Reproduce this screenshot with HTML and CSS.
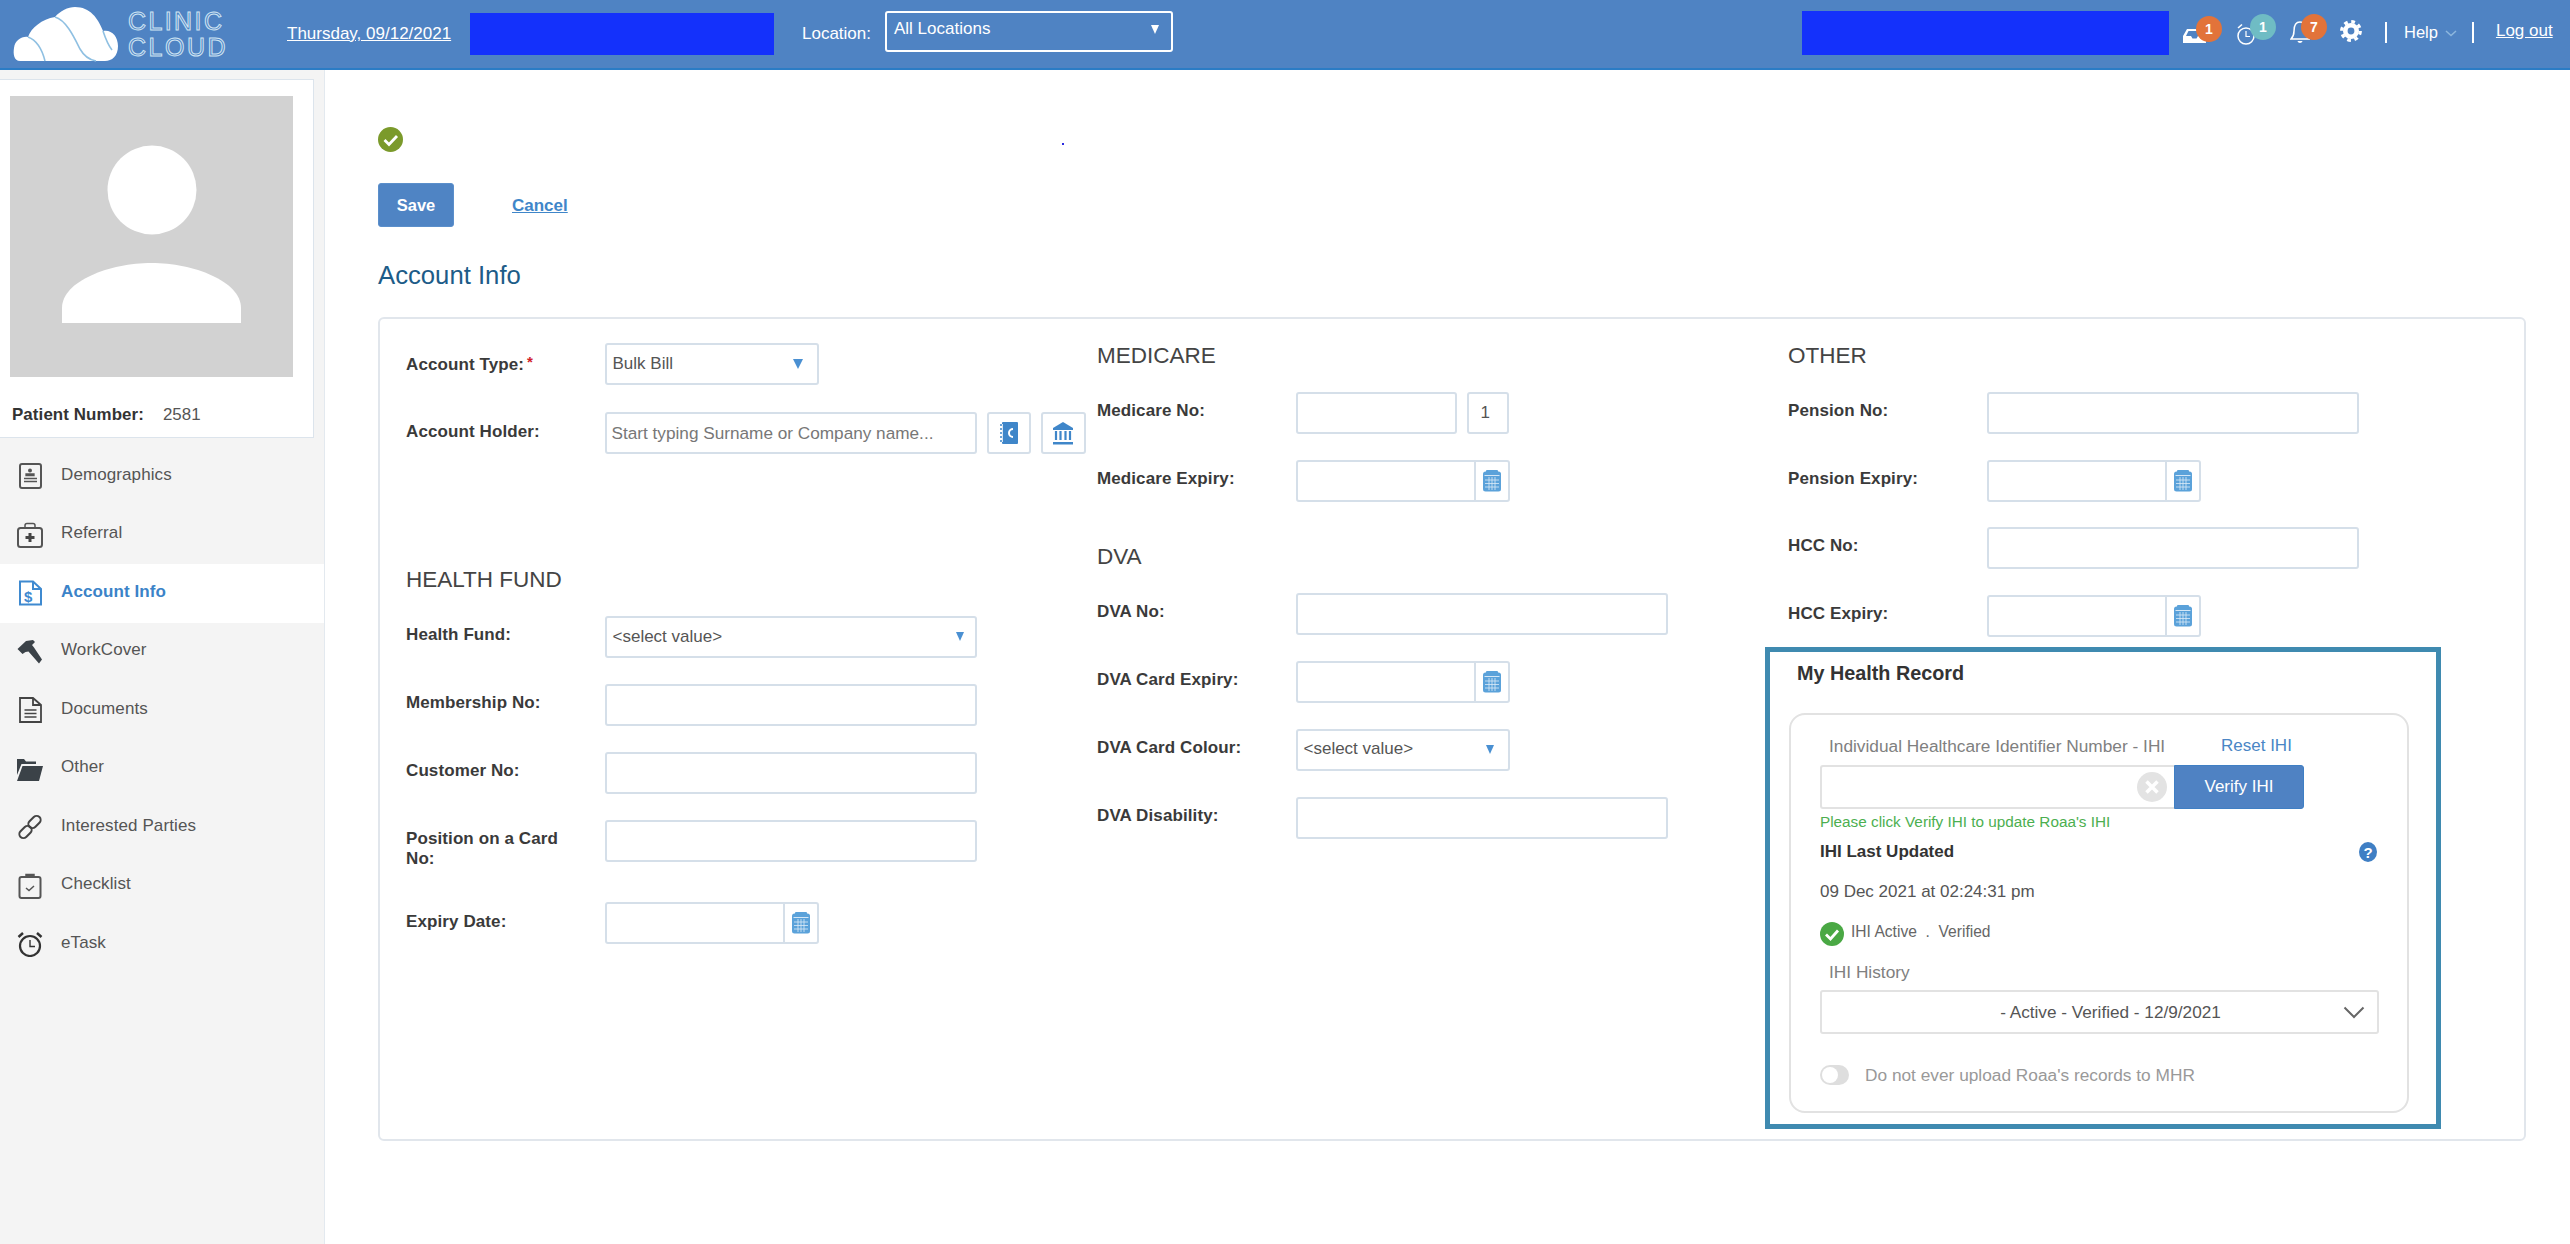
FILE: index.html
```html
<!DOCTYPE html>
<html lang="en">
<head>
<meta charset="utf-8">
<title>Clinic Cloud - Account Info</title>
<link rel="stylesheet" href="styles.css">
</head>
<body>
<svg class="defs" width="0" height="0" aria-hidden="true">
  <symbol id="cal" viewBox="0 0 18 22">
    <rect x="0" y="1.5" width="18" height="20" rx="2.5" fill="#5ba2da"/>
    <rect x="3" y="0" width="12" height="3" rx="1" fill="#5ba2da"/>
    <path d="M1.5 5.500h15" stroke="#d5e7f6" stroke-width="1"/>
    <path d="M6 7v13M9 7v13M12 7v13M2 10h14M2 13.500h14M2 17h14" stroke="#dcebf8" stroke-width="0.800"/>
  </symbol>
</svg>

<header class="topbar">
  <div class="logo">
    <svg class="logo-cloud" width="106" height="56" viewBox="13 2 106 56">
      <path d="M20 57C14 57 13 50 14 44C15 36 22 32 28 33C31 24 42 15 55 13C60 7 68 3 75 3C90 3 98 14 103 27C111 25 118 32 118 42C118 52 112 57 105 57Z" fill="#fff"/>
      <path d="M28 33C36 36 42 45 45 57M55 13C66 16 74 33 80 45C84 52 90 56 96 57M103 27C106 36 108 41 112 46" fill="none" stroke="#8fc0e2" stroke-width="1.6"/>
    </svg>
    <div class="logo-text"><span class="logo-l1">CLINIC</span><span class="logo-l2">CLOUD</span></div>
  </div>
  <a class="top-date">Thursday, 09/12/2021</a>
  <div class="redact redact-a"></div>
  <span class="top-loc">Location:</span>
  <div class="top-select"><span>All Locations</span><i class="tri tri-white"></i></div>
  <div class="redact redact-b"></div>
  <div class="top-icon ti-inbox">
    <svg width="23" height="15" viewBox="0 0 23 15"><path d="M0 8 L4 1 H19 L23 8 V15 H0Z M3 8 H8 L9.5 10.5 H13.5 L15 8 H20 L17.5 3 H5.5Z" fill="#fff" fill-rule="evenodd"/></svg>
    <b class="badge orange">1</b>
  </div>
  <div class="top-icon ti-clock">
    <svg width="18" height="23" viewBox="0 0 18 23"><circle cx="9" cy="13" r="8" fill="none" stroke="#fff" stroke-width="1.5"/><path d="M9 8v5.5h4" fill="none" stroke="#fff" stroke-width="1.2"/><path d="M1 5L5 1.5" stroke="#fff" stroke-width="1.6"/></svg>
    <b class="badge teal">1</b>
  </div>
  <div class="top-icon ti-bell">
    <svg width="20" height="23" viewBox="0 0 20 23"><path d="M10 1C5 1 4 6 4 10C4 14 3 16 1 18H19C17 16 16 14 16 10C16 6 15 1 10 1Z" fill="none" stroke="#fff" stroke-width="1.5"/><path d="M7.5 20C8 22.500 12 22.500 12.500 20Z" fill="#fff"/></svg>
    <b class="badge orange">7</b>
  </div>
  <svg class="gear" width="22" height="22" viewBox="0 0 22 22"><circle cx="11" cy="11" r="5.700" fill="none" stroke="#fff" stroke-width="4.600"/><circle cx="11" cy="11" r="9.300" fill="none" stroke="#fff" stroke-width="3.200" stroke-dasharray="3.700 3.600"/></svg>
  <span class="sep sep-a"></span>
  <span class="top-help">Help</span>
  <svg class="help-chev" width="12" height="7" viewBox="0 0 12 7"><path d="M1 1l5 4.500L11 1" fill="none" stroke="#8db7de" stroke-width="1.500"/></svg>
  <span class="sep sep-b"></span>
  <a class="top-logout">Log out</a>
</header>

<div class="shell">
  <aside class="sidebar">
    <div class="patient-card">
      <div class="avatar">
        <svg width="283" height="281" viewBox="0 0 283 281"><circle cx="142" cy="94" r="44.500" fill="#fff"/><path d="M52 227V212C52 185 100 167 141.500 167C183 167 231 185 231 212V227Z" fill="#fff"/></svg>
      </div>
      <div class="patient-num"><b>Patient Number:</b><span>2581</span></div>
    </div>
    <nav class="nav">
      <a class="nav-item"><svg class="nav-ic" width="26" height="26" viewBox="0 0 26 26"><rect x="3" y="1" width="21" height="24" rx="2" fill="none" stroke="#555" stroke-width="2"/><circle cx="13" cy="7.500" r="2" fill="#555"/><path d="M9 12.500h8v-1.500h-8zM7 15.500h13M7 18.500h13" fill="#555" stroke="#555" stroke-width="1.300"/></svg><span>Demographics</span></a>
      <a class="nav-item"><svg class="nav-ic" width="26" height="26" viewBox="0 0 26 26"><rect x="1" y="6" width="24" height="19" rx="2.500" fill="none" stroke="#555" stroke-width="2"/><path d="M8 6V3.500Q8 1.500 10 1.500H16Q18 1.500 18 3.500V6" fill="none" stroke="#555" stroke-width="1.500"/><path d="M13 11v9M8.500 15.500h9" stroke="#444" stroke-width="3"/></svg><span>Referral</span></a>
      <a class="nav-item active"><svg class="nav-ic" width="26" height="26" viewBox="0 0 26 26"><path d="M3 1.500H16L24 9V24.500H3Z M16 1.500V9H24" fill="none" stroke="#3f8ad0" stroke-width="2"/><text x="7" y="22" class="ic-dollar">$</text></svg><span>Account Info</span></a>
      <a class="nav-item"><svg class="nav-ic" width="26" height="26" viewBox="0 0 26 26"><path d="M0.500 10L9 2L16 1L18 3L15 6L17 8.500L25 20.500L22 24.500L11.500 12.500L8.500 13L5.500 15Z" fill="#3b4248"/></svg><span>WorkCover</span></a>
      <a class="nav-item"><svg class="nav-ic" width="26" height="26" viewBox="0 0 26 26"><path d="M3 1H16L24 8V25H3Z M16 1V8H24" fill="none" stroke="#444" stroke-width="1.800"/><path d="M7.500 13h12M7.500 16.500h12M7.500 20h12" stroke="#444" stroke-width="1.500"/></svg><span>Documents</span></a>
      <a class="nav-item"><svg class="nav-ic" width="26" height="26" viewBox="0 0 26 26"><path d="M0 3H7L9 5.500H19V8H4.500L0 19Z" fill="#3b4248"/><path d="M5.500 10H26L22 25H0Z" fill="#3b4248"/></svg><span>Other</span></a>
      <a class="nav-item"><svg class="nav-ic" width="26" height="26" viewBox="0 0 26 26"><g fill="none" stroke="#444" stroke-width="2"><rect x="-7" y="-4" width="14" height="8" rx="4" transform="translate(8.500 18) rotate(-45)"/><rect x="-7" y="-4" width="14" height="8" rx="4" transform="translate(17.500 8) rotate(-45)"/></g></svg><span>Interested Parties</span></a>
      <a class="nav-item"><svg class="nav-ic" width="26" height="26" viewBox="0 0 26 26"><rect x="2.500" y="4" width="21" height="21" rx="2" fill="none" stroke="#555" stroke-width="2"/><path d="M9 4V1.500H17V4" fill="#555" stroke="#555" stroke-width="1.500"/><path d="M9 15l3 2.500 5-4.500" fill="none" stroke="#555" stroke-width="1.500"/></svg><span>Checklist</span></a>
      <a class="nav-item"><svg class="nav-ic" width="26" height="26" viewBox="0 0 26 26"><circle cx="13" cy="15" r="10" fill="none" stroke="#333" stroke-width="2.200"/><path d="M13 9v6.500h5" fill="none" stroke="#333" stroke-width="1.400"/><path d="M1.500 6L6 2M24.500 6L20 2" stroke="#333" stroke-width="2.500"/></svg><span>eTask</span></a>
    </nav>
  </aside>

  <main class="main">
    <div class="status-row">
      <svg width="25" height="25" viewBox="0 0 25 25"><circle cx="12.500" cy="12.500" r="12.500" fill="#7b9a2b"/><path d="M6.500 13l4.500 4.500 8-8.500" fill="none" stroke="#fff" stroke-width="2.800"/></svg>
      <span class="blue-dot"></span>
    </div>
    <div class="actions">
      <button class="btn-save" type="button">Save</button>
      <a class="link-cancel">Cancel</a>
    </div>
    <h1 class="page-title">Account Info</h1>

    <section class="panel">
      <div class="col col-one">
        <div class="row row-first">
          <label class="lab">Account Type:<em class="req">*</em></label>
          <div class="ctl sel w-mid"><span>Bulk Bill</span><i class="tri"></i></div>
        </div>
        <div class="row row-holder">
          <label class="lab lab-low">Account Holder:</label>
          <div class="ctl w-wide ph">Start typing Surname or Company name...</div>
          <div class="ctl icon-btn">
            <svg width="20" height="24" viewBox="0 0 20 24"><rect x="3" y="1" width="16" height="22" rx="1" fill="#3f86c9"/><path d="M1 4h4M1 8h4M1 12h4M1 16h4M1 20h4" stroke="#3f86c9" stroke-width="1.600"/><path d="M3.500 3v18" stroke="#fff" stroke-width="0.800"/><path d="M14 8a4 4 0 0 0 0 8" fill="none" stroke="#fff" stroke-width="2"/></svg>
          </div>
          <div class="ctl icon-btn icon-btn-b">
            <svg width="22" height="24" viewBox="0 0 22 24"><path d="M11 1L21 7V9H1V7Z" fill="#3f86c9"/><path d="M4 10v9M8.500 10v9M13.500 10v9M18 10v9" stroke="#3f86c9" stroke-width="2.200"/><path d="M1 21h20v2.500H1Z" fill="#3f86c9"/></svg>
          </div>
        </div>
        <h2 class="sec sec-fund">HEALTH FUND</h2>
        <div class="row">
          <label class="lab">Health Fund:</label>
          <div class="ctl sel w-wide"><span>&lt;select value&gt;</span><i class="tri tri-sm"></i></div>
        </div>
        <div class="row"><label class="lab">Membership No:</label><input class="ctl w-wide" type="text"></div>
        <div class="row"><label class="lab">Customer No:</label><input class="ctl w-wide" type="text"></div>
        <div class="row row-tall"><label class="lab">Position on a Card No:</label><input class="ctl w-wide" type="text"></div>
        <div class="row">
          <label class="lab lab-low">Expiry Date:</label>
          <div class="ctl date w-mid"><span class="date-btn"><svg width="18" height="22"><use href="#cal"/></svg></span></div>
        </div>
      </div>

      <div class="col">
        <h2 class="sec">MEDICARE</h2>
        <div class="row">
          <label class="lab">Medicare No:</label>
          <input class="ctl w-medi" type="text">
          <div class="ctl w-tiny">1</div>
        </div>
        <div class="row">
          <label class="lab">Medicare Expiry:</label>
          <div class="ctl date w-mid"><span class="date-btn"><svg width="18" height="22"><use href="#cal"/></svg></span></div>
        </div>
        <h2 class="sec sec-dva">DVA</h2>
        <div class="row"><label class="lab">DVA No:</label><input class="ctl w-wide" type="text"></div>
        <div class="row">
          <label class="lab">DVA Card Expiry:</label>
          <div class="ctl date w-mid"><span class="date-btn"><svg width="18" height="22"><use href="#cal"/></svg></span></div>
        </div>
        <div class="row">
          <label class="lab">DVA Card Colour:</label>
          <div class="ctl sel w-mid"><span>&lt;select value&gt;</span><i class="tri tri-sm"></i></div>
        </div>
        <div class="row"><label class="lab">DVA Disability:</label><input class="ctl w-wide" type="text"></div>
      </div>

      <div class="col col-other">
        <h2 class="sec">OTHER</h2>
        <div class="row"><label class="lab">Pension No:</label><input class="ctl w-wide" type="text"></div>
        <div class="row">
          <label class="lab">Pension Expiry:</label>
          <div class="ctl date w-mid"><span class="date-btn"><svg width="18" height="22"><use href="#cal"/></svg></span></div>
        </div>
        <div class="row"><label class="lab">HCC No:</label><input class="ctl w-wide" type="text"></div>
        <div class="row">
          <label class="lab">HCC Expiry:</label>
          <div class="ctl date w-mid"><span class="date-btn"><svg width="18" height="22"><use href="#cal"/></svg></span></div>
        </div>

        <div class="mhr">
          <h3 class="mhr-title">My Health Record</h3>
          <div class="mhr-card">
            <div class="ihi-head"><span class="muted-label">Individual Healthcare Identifier Number - IHI</span><a class="reset">Reset IHI</a></div>
            <div class="ihi-group">
              <div class="ihi-input">
                <svg width="30" height="30" viewBox="0 0 30 30"><circle cx="15" cy="15" r="15" fill="#e3e3e3"/><path d="M9.500 9.500l11 11M20.500 9.500l-11 11" stroke="#fff" stroke-width="3.500"/></svg>
              </div>
              <button class="btn-verify" type="button">Verify IHI</button>
            </div>
            <p class="ihi-msg">Please click Verify IHI to update Roaa's IHI</p>
            <div class="ihi-updated">
              <b>IHI Last Updated</b>
              <svg width="18" height="20" viewBox="0 0 18 20"><ellipse cx="9" cy="10" rx="9" ry="10" fill="#3f7fc4"/><text x="9" y="15.500" class="ic-q">?</text></svg>
            </div>
            <p class="ihi-date">09 Dec 2021 at 02:24:31 pm</p>
            <div class="ihi-status">
              <svg width="24" height="24" viewBox="0 0 24 24"><circle cx="12" cy="12" r="12" fill="#4aa844"/><path d="M6 12.500l4.500 4.500 7.500-8.500" fill="none" stroke="#fff" stroke-width="2.800"/></svg>
              <span>IHI Active &nbsp;.&nbsp; Verified</span>
            </div>
            <div class="muted-label hist-label">IHI History</div>
            <div class="hist-select">
              <span>- Active - Verified - 12/9/2021</span>
              <svg width="22" height="13" viewBox="0 0 22 13"><path d="M1.500 1.500L11 11l9.500-9.500" fill="none" stroke="#666" stroke-width="2"/></svg>
            </div>
            <div class="mhr-toggle"><span class="toggle"><i></i></span><span>Do not ever upload Roaa's records to MHR</span></div>
          </div>
        </div>
      </div>
    </section>
  </main>
</div>
</body>
</html>
```

FILE: styles.css
```css
* { box-sizing: border-box; }
html, body { margin: 0; padding: 0; }
body {
  width: 2570px;
  height: 1244px;
  overflow: hidden;
  background: #fff;
  font-family: "Liberation Sans", Arial, sans-serif;
  font-size: 17px;
  color: #444;
}
.defs { position: absolute; }
a { cursor: pointer; }

/* top bar */
.topbar {
  height: 70px;
  display: flex;
  align-items: center;
  background: #4f83c3;
  border-bottom: 2px solid #2b7cc5;
  color: #fff;
}
.logo { display: flex; align-items: center; margin-left: 13px; width: 245px; flex: none; }
.logo-cloud { flex: none; }
.logo-text {
  display: flex;
  flex-direction: column;
  margin-left: 9px;
  font-size: 25px;
  line-height: 26px;
  color: transparent;
  -webkit-text-stroke: 1px #cfe5f3;
}
.logo-l1 { letter-spacing: 2.400px; }
.logo-l2 { letter-spacing: 2.500px; }
.top-date { margin-left: 29px; font-size: 17px; color: #fff; text-decoration: underline; flex: none; width: 166px; white-space: nowrap; }
.redact { height: 42px; background: #1431fb; flex: none; }
.redact-a { width: 304px; margin-left: 17px; }
.top-loc { margin-left: 28px; width: 83px; flex: none; }
.top-select {
  width: 288px;
  height: 41px;
  flex: none;
  display: flex;
  align-items: center;
  justify-content: space-between;
  padding: 0 12px 4px 7px;
  border: 2px solid #fff;
  border-radius: 3px;
  margin-bottom: 6px;
}
.redact-b { width: 367px; height: 44px; margin-left: 629px; margin-bottom: 2px; }
.tri { width: 0; height: 0; border-left: 5px solid transparent; border-right: 5px solid transparent; border-top: 10px solid #4a90d2; flex: none; }
.tri-white { border-top-color: #fff; border-left-width: 4.500px; border-right-width: 4.500px; border-top-width: 9px; }
.tri-sm { border-left-width: 4.500px; border-right-width: 4.500px; border-top-width: 9px; }

.top-icon { position: relative; flex: none; display: flex; }
.ti-inbox { margin-left: 14px; margin-top: 2px; }
.ti-clock { margin-left: 31px; margin-top: 0; }
.ti-bell { margin-left: 35px; margin-top: -4px; }
.badge {
  position: absolute;
  width: 26px;
  height: 26px;
  border-radius: 50%;
  top: -12px;
  left: 13px;
  font-size: 14px;
  line-height: 26px;
  text-align: center;
  color: #fff;
}
.orange { background: #e2733a; }
.teal { background: #6fbcc4; }
.ti-clock .badge { left: 13px; top: -9px; }
.ti-bell .badge { left: 11px; top: -7px; }
.gear { margin-left: 30px; margin-bottom: 6px; flex: none; }
.sep { width: 2px; height: 21px; background: #fff; flex: none; margin-bottom: 4px; }
.sep-a { margin-left: 23px; }
.top-help { margin-left: 17px; font-size: 16.500px; margin-bottom: 4px; }
.help-chev { margin-left: 7px; margin-bottom: 2px; flex: none; }
.sep-b { margin-left: 15px; }
.top-logout { margin-left: 22px; font-size: 17px; color: #fff; text-decoration: underline; margin-bottom: 6px; white-space: nowrap; }

/* shell */
.shell { display: flex; height: 1174px; }
.sidebar {
  width: 325px;
  flex: none;
  background: #f4f4f4;
  border-right: 1px solid #e3e9ef;
  padding-top: 9px;
}
.patient-card {
  width: 314px;
  height: 359px;
  background: #fff;
  border: 1px solid #dce4ec;
  border-left: 0;
  padding: 16px 0 0 10px;
}
.avatar { width: 283px; height: 281px; background: #d2d2d2; }
.avatar svg { display: block; }
.patient-num { margin-top: 28px; margin-left: 2px; font-size: 16.900px; letter-spacing: 0.100px; color: #333; }
.patient-num span { margin-left: 19px; color: #555; letter-spacing: 0; }
.nav { margin-top: 9px; display: flex; flex-direction: column; }
.nav-item {
  height: 58.500px;
  display: flex;
  align-items: center;
  padding-left: 17px;
  color: #555;
  width: 324px;
}
.nav-item span { margin-left: 18px; padding-bottom: 3px; letter-spacing: 0.100px; }
.nav-ic { flex: none; }
.nav-item.active { background: #fff; color: #3b83c8; font-weight: bold; }
.ic-dollar { font-family: "Liberation Sans", Arial, sans-serif; font-size: 15px; font-weight: bold; fill: #3f8ad0; }
.ic-q { font-family: "Liberation Sans", Arial, sans-serif; font-size: 15px; font-weight: bold; fill: #fff; text-anchor: middle; }

/* main */
.main { flex: 1; padding: 57px 44px 0 53px; }
.status-row { display: flex; align-items: flex-start; height: 25px; }
.status-row svg { flex: none; }
.blue-dot { width: 2px; height: 2px; background: #2a2ae0; margin-left: 659px; margin-top: 16px; }
.actions { display: flex; align-items: center; margin-top: 31px; }
.btn-save {
  width: 76px;
  height: 44px;
  border: 1px solid #5b8fcb;
  border-radius: 3px;
  background: #4f84c4;
  color: #fff;
  font: bold 16.500px "Liberation Sans", Arial, sans-serif;
  padding: 0 0 0 0;
}
.link-cancel { margin-left: 58px; font-weight: bold; color: #3f86c9; text-decoration: underline; margin-top: 2px; }
.page-title { margin: 32px 0 0; font-size: 25.700px; line-height: 32px; font-weight: normal; color: #1d5c88; height: 32px; }

.panel {
  margin-top: 26px;
  height: 824px;
  width: 2148px;
  border: 2px solid #e1e6ec;
  border-radius: 6px;
  padding: 24px 0 0 26px;
  display: grid;
  grid-template-columns: 691px 691px 1fr;
}
.col { display: flex; flex-direction: column; }
.row { display: flex; align-items: flex-start; margin-bottom: 26px; flex: none; }
.row-tall { margin-bottom: 33px; }
.row-first { margin-bottom: 27px; }
.row-holder { margin-bottom: 0; }
.col-other .row { margin-bottom: 25.500px; }
.lab {
  width: 198.500px;
  flex: none;
  padding: 9px 20px 0 0;
  font-weight: bold;
  line-height: 20px;
  letter-spacing: 0.100px;
  color: #3a3a3a;
}
.lab-low { padding-top: 10px; }
.req { color: #d0202a; font-style: normal; font-size: 15px; margin-left: 3px; vertical-align: 3px; }
.ctl {
  height: 42px;
  flex: none;
  border: 2px solid #d5dfe9;
  border-radius: 3px;
  background: #fff;
  display: flex;
  align-items: center;
  font: 17px "Liberation Sans", Arial, sans-serif;
  color: #555;
}
input.ctl { padding: 0 8px; outline: none; }
.w-wide { width: 372px; }
.w-mid { width: 214px; }
.w-medi { width: 161px; }
.w-tiny { width: 42px; margin-left: 10px; padding-left: 12px; }
.ph { padding-left: 5px; color: #777; font-size: 17.200px; white-space: nowrap; }
.sel { justify-content: space-between; padding: 0 14px 1px 6px; }
.sel.w-wide { padding-right: 11px; }
.date { justify-content: flex-end; }
.date-btn { width: 34px; height: 100%; border-left: 2px solid #d5dfe9; display: flex; align-items: center; justify-content: center; }
.date-btn svg { display: block; }
.icon-btn { width: 44px; margin-left: 10px; justify-content: center; }
.icon-btn-b { width: 45px; }
.sec { margin: 0 0 23px; font-size: 22.500px; line-height: 26px; font-weight: normal; color: #444; }
.sec-fund { margin-top: 113px; }
.sec-dva { margin-top: 15.500px; }

/* my health record */
.mhr {
  margin-top: -15px;
  margin-left: -23px;
  width: 676px;
  height: 482px;
  border: 5px solid #3f8ab0;
  padding: 0 0 0 19px;
}
.mhr-title { margin: 10px 0 0 8px; font-size: 19.800px; line-height: 22px; font-weight: bold; color: #333; }
.mhr-card {
  margin-top: 29px;
  width: 620px;
  height: 400px;
  border: 2px solid #e2e2e2;
  border-radius: 16px;
  padding: 21px 0 0 29px;
}
.ihi-head { display: flex; height: 20px; line-height: 20px; }
.muted-label { margin-left: 9px; color: #808080; font-size: 17.300px; white-space: nowrap; }
.ihi-head .muted-label { width: 392px; flex: none; }
.reset { color: #4a86c5; font-size: 17px; }
.ihi-group { display: flex; margin-top: 9px; height: 44px; }
.ihi-input {
  width: 354px;
  height: 44px;
  border: 2px solid #e2e2e2;
  border-right: 0;
  border-radius: 3px 0 0 3px;
  display: flex;
  align-items: center;
  justify-content: flex-end;
  padding-right: 7px;
}
.btn-verify {
  width: 130px;
  height: 44px;
  border: 1px solid #3f7fc4;
  border-radius: 0 3px 3px 0;
  background: #4f82c3;
  color: #fff;
  padding: 0;
  font: 17px "Liberation Sans", Arial, sans-serif;
}
.ihi-msg { margin: 4px 0 0; height: 18px; line-height: 18px; font-size: 15.300px; color: #4caf50; white-space: nowrap; }
.ihi-updated { margin-top: 11px; height: 20px; line-height: 20px; width: 557px; display: flex; justify-content: space-between; align-items: center; color: #333; font-size: 17px; }
.ihi-date { margin: 20px 0 0; height: 20px; line-height: 20px; color: #555; }
.ihi-status { margin-top: 20px; height: 24px; display: flex; align-items: center; font-size: 15.600px; color: #666; }
.ihi-status span { margin-left: 7px; padding-bottom: 4px; }
.hist-label { margin-top: 16px; height: 20px; line-height: 20px; }
.hist-select {
  margin-top: 8px;
  width: 559px;
  height: 44px;
  border: 2px solid #e2e2e2;
  border-radius: 3px;
  display: flex;
  align-items: center;
  padding: 0 12px 0 56px;
  color: #555;
  font-size: 17.200px;
}
.hist-select span { flex: 1; text-align: center; }
.mhr-toggle { margin-top: 31px; display: flex; align-items: center; height: 20px; color: #999; font-size: 17.300px; }
.toggle { width: 29px; height: 20px; border-radius: 10px; background: #dedede; display: flex; align-items: center; padding-left: 2px; margin-right: 16px; flex: none; }
.toggle i { width: 16px; height: 16px; border-radius: 50%; background: #fff; }
```
